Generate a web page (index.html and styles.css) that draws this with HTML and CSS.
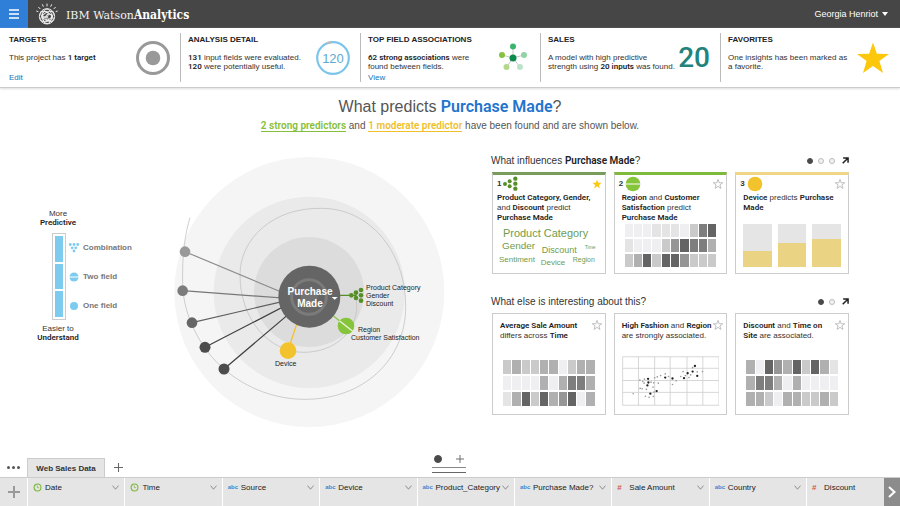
FILE: index.html
```html
<!DOCTYPE html>
<html lang="en">
<head>
<meta charset="utf-8">
<title>IBM Watson Analytics</title>
<link rel="stylesheet" href="styles.css">
</head>
<body>
<svg class="defs" aria-hidden="true">
  <symbol id="star" viewBox="0 0 34 33"><path d="M17 1L20.9 12.2L33 12.4L23.4 19.6L27 31.5L17 24.5L7 31.5L10.6 19.6L1 12.4L13.1 12.2Z"/></symbol>
  <symbol id="open" viewBox="0 0 6 6"><path d="M1 .8H5.2V5M5 1L.6 5.4" fill="none" stroke="#222" stroke-width="1.3"/></symbol>
  <symbol id="chev" viewBox="0 0 7 5"><path d="M.5 .6L3.5 4.2L6.5 .6" fill="none" stroke="#777" stroke-width=".8"/></symbol>
  <symbol id="clock" viewBox="0 0 10 10"><circle cx="5" cy="5" r="3.8" fill="none" stroke="#7cb93c" stroke-width="1.2"/><path d="M4.8 2.6V5.2H6.8" fill="none" stroke="#7cb93c" stroke-width=".8"/></symbol>
  <symbol id="plus" viewBox="0 0 12 12"><path d="M6 0V12M0 6H12" fill="none" stroke="currentColor" stroke-width="1.4"/></symbol>
</svg>

<header class="topbar">
  <button class="menu" aria-label="Menu"><svg viewBox="0 0 10 10"><path d="M0 1H10M0 5H10M0 9H10" stroke="#fff" stroke-width="1.6"/></svg></button>
  <svg class="watson" viewBox="0 0 66 66" aria-hidden="true">
    <g fill="none" stroke="#eee" stroke-width="3">
      <path d="M33 2V10M19 4L22 11M47 4L44 11M7 12L13 18M59 12L53 18M1 24L7 26M65 24L59 26"/>
      <circle cx="33" cy="40" r="23"/>
      <ellipse cx="33" cy="40" rx="22" ry="11" transform="rotate(35 33 40)"/>
      <ellipse cx="33" cy="40" rx="22" ry="11" transform="rotate(-35 33 40)"/>
      <ellipse cx="33" cy="40" rx="22" ry="14" transform="rotate(90 33 40)"/>
      <circle cx="28" cy="34" r="9"/><circle cx="39" cy="43" r="10"/><circle cx="29" cy="49" r="8"/>
    </g>
  </svg>
  <h1 class="brand">IBM Watson<b>Analytics</b></h1>
  <button class="user">Georgia Henriot <span class="caret"></span></button>
</header>

<section class="summary">
  <article class="stat">
    <div class="info"><h2>TARGETS</h2><p>This project has <b>1 target</b></p><a href="#edit" class="low">Edit</a></div>
    <svg class="badge" viewBox="0 0 34 34"><circle cx="17" cy="17" r="15.5" fill="none" stroke="#999" stroke-width="3"/><circle cx="17" cy="17" r="7.3" fill="#999"/></svg>
  </article>
  <article class="stat">
    <div class="info"><h2>ANALYSIS DETAIL</h2><p><b>131</b> input fields were evaluated.<br><b>120</b> were potentially useful.</p></div>
    <svg class="badge ring" viewBox="0 0 34 34"><circle cx="17" cy="17" r="15.8" fill="none" stroke="#7cc5ea" stroke-width="2.2"/><path d="M10.500 2.600A15.800 15.800 0 0 1 16 1.230" fill="none" stroke="#bbb" stroke-width="2.2"/><text x="17" y="22">120</text></svg>
  </article>
  <article class="stat">
    <div class="info"><h2>TOP FIELD ASSOCIATIONS</h2><p><b>62 strong associations</b> were<br>found between fields.</p><a href="#view">View</a></div>
    <svg class="badge net" viewBox="0 0 34 34"><path d="M17 17V5.500M17 17L6 14M17 17L28 14M17 17L10.500 26M17 17L24 26" stroke="#bbb" stroke-width=".8"/><circle cx="17" cy="17" r="3.500" fill="#0d8a4c"/><circle cx="17" cy="5.500" r="3" fill="#3cb46c"/><circle cx="6" cy="14" r="3" fill="#86c240"/><circle cx="28" cy="14" r="3" fill="#92d2a4"/><circle cx="10.500" cy="26" r="3" fill="#b3d88b"/><circle cx="24" cy="26" r="3" fill="#bbe3c8"/></svg>
  </article>
  <article class="stat">
    <div class="info"><h2>SALES</h2><p>A model with high predictive<br>strength using <b>20 inputs</b> was found.</p></div>
    <strong class="score">20</strong>
  </article>
  <article class="stat">
    <div class="info"><h2>FAVORITES</h2><p>One insights has been marked as<br>a favorite.</p></div>
    <svg class="badge gold"><use href="#star"/></svg>
  </article>
</section>

<main>
  <h2 class="question">What predicts <b>Purchase Made</b>?</h2>
  <p class="answer"><a class="strong" href="#strong">2 strong predictors</a> and <a class="moderate" href="#moderate">1 moderate predictor</a> have been found and are shown below.</p>

  <div class="board">
    <aside class="legend">
      <p>More<br><b>Predictive</b></p>
      <div class="scale">
        <div class="bar"><span></span><span></span><span></span></div>
        <ul>
          <li><svg viewBox="0 0 10 10" fill="#7ecbf0"><circle cx="1.300" cy="1.500" r="1.400"/><circle cx="5" cy="1.500" r="1.400"/><circle cx="8.700" cy="1.500" r="1.400"/><circle cx="3.200" cy="4.800" r="1.400"/><circle cx="6.800" cy="4.800" r="1.400"/><circle cx="5" cy="8" r="1.400"/></svg>Combination</li>
          <li><svg viewBox="0 0 10 10"><circle cx="5" cy="5" r="4.500" fill="#7ecbf0"/><path d="M0 5H10" stroke="#fff"/></svg>Two field</li>
          <li><svg viewBox="0 0 10 10"><circle cx="5" cy="5" r="4" fill="#7ecbf0"/></svg>One field</li>
        </ul>
      </div>
      <p>Easier to<br><b>Understand</b></p>
    </aside>

    <svg class="spiral" viewBox="0 0 300 280" role="img" aria-label="Predictors of Purchase Made">
      <g transform="scale(.33333)">
        <circle cx="448" cy="426" r="405" fill="#f5f5f5"/>
        <circle cx="448" cy="427" r="287" fill="#eaeaea"/>
        <circle cx="447" cy="426" r="165" fill="#dcdcdc"/>
        <path d="M90 203C76 250 66 310 68 400C69 500 125 600 192 657C262 718 350 748 435 748C610 748 737 630 737 470C737 300 625 175 485 175C340 172 240 265 240 375C240 510 330 607 430 607C530 607 590 540 590 470L588 430" fill="none" stroke="#c4c4c4" stroke-width="2.500"/>
        <g stroke-width="3.500">
          <path d="M448 461L75 305" stroke="#8c8c8c"/><path d="M448 450L68 422" stroke="#777"/>
          <path d="M448 436L96 518" stroke="#5f5f5f"/><path d="M448 430L135 592M448 440L192 657" stroke="#3f3f3f"/>
          <path d="M437 440L384 602" stroke="#f2c32c" stroke-width="4"/>
          <path d="M448 436H590" stroke="#568f27" stroke-width="4"/><path d="M448 440L558 528" stroke="#86c53b" stroke-width="4"/>
        </g>
        <circle cx="75" cy="305" r="16" fill="#999"/><circle cx="68" cy="422" r="16" fill="#7c7c7c"/><circle cx="96" cy="518" r="16" fill="#666"/><circle cx="135" cy="592" r="16.500" fill="#4c4c4c"/><circle cx="192" cy="657" r="16.500" fill="#4c4c4c"/>
        <circle cx="448" cy="440" r="93" fill="#656565"/>
        <circle cx="447" cy="441" r="52" fill="none" stroke="#7b7b7b" stroke-width="9"/>
        <circle cx="447" cy="441" r="26" fill="#737373"/>
        <path d="M515 441H533L524 449Z" fill="#fff"/>
        <circle cx="384" cy="602" r="25" fill="#f2c32c"/>
        <circle cx="558" cy="528" r="25" fill="#86c53b"/><path d="M538 512L578 544" stroke="#eaf5dc" stroke-width="4"/>
        <g fill="#568f27"><circle cx="574" cy="436" r="7"/><circle cx="588" cy="428" r="7"/><circle cx="588" cy="444" r="7"/><circle cx="603" cy="420" r="7"/><circle cx="603" cy="436" r="7"/><circle cx="603" cy="452" r="7"/></g>
      </g>
      <g class="core"><text x="150" y="145">Purchase</text><text x="150" y="157">Made</text></g>
      <g class="tag"><text x="206" y="140">Product Category</text><text x="206" y="148">Gender</text><text x="206" y="156">Discount</text><text x="198" y="182">Region</text><text x="191" y="190">Customer Satisfaction</text><text x="115" y="216">Device</text></g>
    </svg>

    <div class="insights">
      <section>
        <header><h3>What influences <b>Purchase Made</b>?</h3><nav><button class="dot on" aria-label="Page 1"></button><button class="dot" aria-label="Page 2"></button><button class="dot" aria-label="Page 3"></button><button class="open" aria-label="Open"><svg><use href="#open"/></svg></button></nav></header>
        <div class="cards">
          <article class="card ranked combo">
            <div class="rank">1<svg viewBox="0 0 48 48" fill="#568f27"><circle cx="6" cy="24" r="6"/><circle cx="20" cy="16" r="6"/><circle cx="20" cy="31" r="6"/><circle cx="37" cy="8" r="6.500"/><circle cx="37" cy="23" r="6.500"/><circle cx="37" cy="38" r="6.500"/></svg></div>
            <button class="fav on" aria-label="Favorite"><svg><use href="#star"/></svg></button>
            <p><b>Product Category, Gender,</b><br>and <b>Discount</b> predict<br><b>Purchase Made</b></p>
            <svg class="cloud" viewBox="0 0 104 44"><text class="w11" x="6" y="14">Product Category</text><text class="w10" x="5" y="26">Gender</text><text class="w9" x="45" y="30">Discount</text><text class="w5" x="88" y="26">Time</text><text class="w8" x="2" y="39">Sentiment</text><text class="w8" x="44" y="42">Device</text><text class="w7" x="76" y="39">Region</text></svg>
          </article>
          <article class="card ranked pair">
            <div class="rank">2<svg viewBox="0 0 48 48"><circle cx="24" cy="24" r="22" fill="#86c53b"/><path d="M2 24H46" stroke="#fff" stroke-width="3"/></svg></div>
            <button class="fav" aria-label="Favorite"><svg><use href="#star"/></svg></button>
            <p><b>Region</b> and <b>Customer</b><br><b>Satisfaction</b> predict<br><b>Purchase Made</b></p>
            <div class="heat"><i class="a"></i><i class="a"></i><i class="a"></i><i class="b"></i><i class="b"></i><i class="b"></i><i class="a"></i><i class="c"></i><i class="f"></i><i class="g"></i><i class="b"></i><i class="a"></i><i class="a"></i><i class="a"></i><i class="c"></i><i class="e"></i><i class="g"></i><i class="f"></i><i class="f"></i><i class="d"></i><i class="c"></i><i class="d"></i><i class="g"></i><i class="c"></i><i class="g"></i><i class="g"></i><i class="e"></i><i class="c"></i><i class="c"></i><i class="c"></i></div>
          </article>
          <article class="card ranked single">
            <div class="rank">3<svg viewBox="0 0 48 48"><circle cx="24" cy="24" r="22" fill="#f2c32c"/></svg></div>
            <button class="fav" aria-label="Favorite"><svg><use href="#star"/></svg></button>
            <p><b>Device</b> predicts <b>Purchase</b><br><b>Made</b></p>
            <div class="levels"><span><i style="height:37%"></i></span><span><i style="height:56%"></i></span><span><i style="height:64%"></i></span></div>
          </article>
        </div>
      </section>
      <section>
        <header><h3>What else is interesting about this?</h3><nav><button class="dot on" aria-label="Page 1"></button><button class="dot" aria-label="Page 2"></button><button class="open" aria-label="Open"><svg><use href="#open"/></svg></button></nav></header>
        <div class="cards">
          <article class="card">
            <button class="fav" aria-label="Favorite"><svg><use href="#star"/></svg></button>
            <p><b>Average Sale Amount</b><br>differs across <b>Time</b></p>
            <div class="heat"><i class="c"></i><i class="d"></i><i class="c"></i><i class="c"></i><i class="d"></i><i class="d"></i><i class="a"></i><i class="c"></i><i class="d"></i><i class="d"></i><i class="a"></i><i class="a"></i><i class="a"></i><i class="a"></i><i class="d"></i><i class="a"></i><i class="d"></i><i class="f"></i><i class="f"></i><i class="d"></i><i class="b"></i><i class="d"></i><i class="g"></i><i class="c"></i><i class="g"></i><i class="d"></i><i class="e"></i><i class="g"></i><i class="a"></i><i class="d"></i></div>
          </article>
          <article class="card">
            <button class="fav" aria-label="Favorite"><svg><use href="#star"/></svg></button>
            <p><b>High Fashion</b> and <b>Region</b><br>are strongly associated.</p>
            <svg class="scatter" viewBox="413 203 296 151">
              <path d="M415 205H707V352H415ZM463 205V352M512 205V352M559 205V352M610 205V352M658 205V352M415 240H707M415 277H707M415 313H707" fill="none" stroke="#cfcfcf" stroke-width="2.500"/>
              <g fill="#999"><circle cx="447" cy="317" r="2.500"/><circle cx="467" cy="276" r="2.500"/><circle cx="468" cy="301" r="2.500"/><circle cx="474" cy="302" r="2.500"/><circle cx="476" cy="280" r="2.500"/><circle cx="481" cy="273" r="2.500"/><circle cx="480" cy="285" r="2.500"/><circle cx="487" cy="304" r="2.500"/><circle cx="484" cy="325" r="2.500"/><circle cx="495" cy="328" r="2.500"/><circle cx="508" cy="325" r="2.500"/><circle cx="510" cy="312" r="2.500"/><circle cx="501" cy="282" r="2.500"/><circle cx="509" cy="284" r="2.500"/><circle cx="512" cy="269" r="2.500"/><circle cx="507" cy="297" r="2.500"/><circle cx="520" cy="266" r="2.500"/><circle cx="523" cy="285" r="2.500"/><circle cx="530" cy="262" r="2.500"/><circle cx="544" cy="257" r="2.500"/><circle cx="554" cy="265" r="2.500"/><circle cx="566" cy="289" r="2.500"/><circle cx="577" cy="278" r="2.500"/><circle cx="591" cy="265" r="2.500"/><circle cx="598" cy="250" r="2.500"/><circle cx="605" cy="262" r="2.500"/><circle cx="616" cy="268" r="2.500"/><circle cx="621" cy="260" r="2.500"/><circle cx="627" cy="238" r="2.500"/><circle cx="641" cy="251" r="2.500"/><circle cx="657" cy="250" r="2.500"/></g>
              <g fill="#222"><circle cx="492" cy="272" r="3.500"/><circle cx="493" cy="283" r="3.500"/><circle cx="490" cy="292" r="3.500"/><circle cx="499" cy="317" r="3.500"/><circle cx="518" cy="309" r="3.500"/><circle cx="544" cy="268" r="3.500"/><circle cx="566" cy="271" r="3.500"/><circle cx="601" cy="270" r="3.500"/><circle cx="612" cy="255" r="3.500"/><circle cx="627" cy="250" r="3.500"/><circle cx="634" cy="233" r="3.500"/><circle cx="641" cy="263" r="3.500"/></g>
            </svg>
          </article>
          <article class="card">
            <button class="fav" aria-label="Favorite"><svg><use href="#star"/></svg></button>
            <p><b>Discount</b> and <b>Time on</b><br><b>Site</b> are associated.</p>
            <div class="heat"><i class="d"></i><i class="a"></i><i class="g"></i><i class="e"></i><i class="d"></i><i class="g"></i><i class="c"></i><i class="g"></i><i class="d"></i><i class="b"></i><i class="d"></i><i class="f"></i><i class="f"></i><i class="d"></i><i class="a"></i><i class="d"></i><i class="a"></i><i class="a"></i><i class="a"></i><i class="a"></i><i class="d"></i><i class="d"></i><i class="c"></i><i class="a"></i><i class="d"></i><i class="d"></i><i class="c"></i><i class="c"></i><i class="d"></i><i class="c"></i></div>
          </article>
        </div>
      </section>
    </div>
  </div>
</main>

<footer>
  <div class="tabs">
    <button class="more" aria-label="More"><span></span><span></span><span></span></button>
    <button class="tab">Web Sales Data</button>
    <button class="add" aria-label="Add data"><svg><use href="#plus"/></svg></button>
    <div class="handle"><span class="dot on"></span><svg><use href="#plus"/></svg></div>
  </div>
  <div class="fields">
    <button class="addfield" aria-label="Add field"><svg viewBox="0 0 12 12"><path d="M6 0V12M0 6H12" stroke="#999" stroke-width="2"/></svg></button>
    <button class="field"><svg class="clock"><use href="#clock"/></svg>Date<svg class="chev"><use href="#chev"/></svg></button>
    <button class="field"><svg class="clock"><use href="#clock"/></svg>Time<svg class="chev"><use href="#chev"/></svg></button>
    <button class="field"><span class="abc">abc</span>Source<svg class="chev"><use href="#chev"/></svg></button>
    <button class="field"><span class="abc">abc</span>Device<svg class="chev"><use href="#chev"/></svg></button>
    <button class="field"><span class="abc">abc</span>Product_Category<svg class="chev"><use href="#chev"/></svg></button>
    <button class="field"><span class="abc">abc</span>Purchase Made?<svg class="chev"><use href="#chev"/></svg></button>
    <button class="field"><span class="num">#</span>Sale Amount<svg class="chev"><use href="#chev"/></svg></button>
    <button class="field"><span class="abc">abc</span>Country<svg class="chev"><use href="#chev"/></svg></button>
    <button class="field"><span class="num">#</span>Discount</button>
    <button class="next" aria-label="Next"><svg viewBox="0 0 8 12"><path d="M1 1L6.500 6L1 11" fill="none" stroke="#fff" stroke-width="2"/></svg></button>
  </div>
</footer>
</body>
</html>
```
FILE: styles.css
```css
* { box-sizing: border-box; margin: 0; padding: 0; }
body {
  min-height: 100vh;
  display: flex;
  flex-direction: column;
  background: #fff;
  color: #333;
  font: 8px/9px "Liberation Sans", Arial, sans-serif;
}
b { color: #222; font-family: Roboto, "Liberation Sans", sans-serif; font-weight: 600; }
a { color: #1a70b8; text-decoration: none; }
button { border: 0; background: none; font: inherit; color: inherit; cursor: pointer; }
ul { list-style: none; }
svg { display: block; flex: none; }
.defs { display: none; }

.topbar { display: flex; align-items: center; height: 28px; background: #464646; color: #fff; }
.menu { width: 28px; height: 28px; background: #2f7fd8; display: grid; place-items: center; }
.menu svg { width: 10px; height: 10px; }
.watson { width: 22px; height: 22px; margin-left: 8px; }
.brand { margin-left: 8px; padding-top: 2px; font: 11px/16px "DejaVu Serif", serif; color: #f2f2f2; }
.brand b { font-family: "DejaVu Serif Condensed", "DejaVu Serif", serif; font-size: 12px; font-weight: 700; color: #fff; }
.user { margin-left: auto; padding-right: 12px; display: flex; align-items: center; gap: 4px; font-family: "Liberation Sans", sans-serif; font-size: 9px; }
.caret { border: 3px solid transparent; border-top: 4px solid #fff; border-bottom: 0; }

.summary {
  display: grid;
  grid-template-columns: repeat(5, 1fr);
  padding: 5px 0;
  border-bottom: 1px solid #ccc;
  box-shadow: 0 1px 2px #ddd;
}
.stat { display: flex; align-items: center; justify-content: space-between; height: 49px; padding: 0 10px 0 7px; border-left: 1px solid #bbb; }
.stat:first-child { border-left: 0; padding-left: 9px; }
.info { align-self: stretch; padding-top: 2px; white-space: nowrap; }
.info h2 { font-size: 8px; line-height: 9px; color: #222; margin-bottom: 9px; }
.info a { display: block; margin-top: 2px; }
.info a.low { margin-top: 11px; }
.badge { width: 34px; height: 34px; }
.gold { fill: #fdc70c; }
.ring text { fill: #5fa9cf; font-size: 13px; text-anchor: middle; }
.score { font: 500 28px/34px Roboto, sans-serif; color: #22837c; }

main { flex: 1; padding-top: 9px; }
.question { font-size: 16px; line-height: 20px; font-weight: 400; text-align: center; color: #555; }
.question b { color: #2374cc; }
.answer { font-size: 10px; line-height: 13px; margin-top: 2px; text-align: center; color: #555; }
.answer a { font-family: Roboto, sans-serif; font-weight: 600; }
.strong { color: #86bf3a; border-bottom: 1px solid #86bf3a; }
.moderate { color: #f0c02c; border-bottom: 1px solid #f0c02c; }

.board { display: grid; grid-template-columns: 160fr 331fr 409fr; margin-top: 18px; }
.legend { padding: 59px 0 0 36px; }
.legend p { width: 44px; text-align: center; }
.scale { display: flex; margin: 6px 0 4px 16px; }
.bar { width: 14px; height: 87px; padding: 2px; border: 1px solid #ccc; display: grid; gap: 2px; }
.bar span { background: #7ecbf0; }
.scale ul { margin-left: 3px; display: grid; }
.scale li { display: flex; align-items: center; gap: 4px; color: #777; font-weight: 700; }
.scale li svg { width: 10px; height: 10px; }

.spiral { width: 300px; height: 280px; }
.core { font-size: 10px; font-weight: 700; fill: #fff; text-anchor: middle; }
.tag { font-size: 7px; fill: #222; }

.insights { padding: 4px 51px 0 0; display: grid; gap: 21px; align-content: start; }
.insights header { display: flex; justify-content: space-between; align-items: center; height: 13px; margin-bottom: 5px; }
.insights h3 { font-size: 10px; line-height: 13px; font-weight: 400; }
.insights nav { display: flex; align-items: center; gap: 5px; }
.dot { width: 6px; height: 6px; border-radius: 50%; border: 1px solid #bbb; background: #f2f2f2; }
.dot.on { background: #4a4a4a; border-color: #4a4a4a; }
.open svg { width: 7px; height: 7px; margin-left: 2px; }
.cards { display: grid; grid-template-columns: repeat(3, 1fr); gap: 8px; margin-left: 1px; }
.card { position: relative; height: 102px; padding: 7px 7px 8px; border: 1px solid #ccc; display: flex; flex-direction: column; justify-content: space-between; line-height: 10px; white-space: nowrap; }
.ranked { padding-top: 1px; padding-bottom: 6px; justify-content: flex-start; border-top: 3px solid; }
.combo { border-top-color: #789c5c; padding-left: 4px; padding-right: 4px; }
.pair { border-top-color: #7fb93c; }
.single { border-top-color: #efd686; }
.rank { display: flex; align-items: center; gap: 2px; height: 16px; font-weight: 700; margin: 0 0 1px -3px; }
.combo .rank { margin-left: 0; }
.rank svg { width: 16px; height: 16px; }
.fav { position: absolute; top: 6px; right: 3px; }
.ranked .fav { top: 4px; }
.fav svg { width: 10px; height: 10px; fill: none; stroke: #aaa; stroke-width: 2.5px; overflow: visible; }
.fav.on svg { fill: #fdc70c; stroke: none; }
.cloud { width: 100%; height: 44px; fill: #6f9c4c; }
.w11 { font-size: 11px; } .w10 { font-size: 10px; } .w9 { font-size: 9px; } .w8 { font-size: 8px; } .w7 { font-size: 7px; } .w5 { font-size: 5px; }
.heat { display: grid; grid-template-columns: repeat(10, 1fr); grid-auto-rows: 14px; gap: 2px 1px; margin: 0 3px; }
.ranked .heat, .levels { margin-top: auto; }
.ranked .heat { grid-auto-rows: 13px; }
.a { background: #efeff1; } .b { background: #e4e4e4; } .c { background: #cacaca; } .d { background: #b0b0b0; }
.e { background: #969696; } .f { background: #7e7e7e; } .g { background: #646464; }
.levels { display: grid; grid-template-columns: repeat(3, 1fr); gap: 6px; height: 43px; }
.levels span { background: #e5e5e5; display: flex; align-items: flex-end; }
.levels i { width: 100%; background: #ead382; }
.scatter { width: 100%; height: 50px; }

.tabs { display: grid; grid-template-columns: 27px 78px 26px 1fr; height: 19px; align-items: center; }
.more { display: flex; gap: 2px; justify-content: center; }
.more span { width: 3px; height: 3px; border-radius: 50%; background: #555; }
.tab { height: 19px; background: #e5e5e5; border: 1px solid #ccc; border-bottom: 0; font-weight: 700; color: #333; }
.add svg { width: 9px; height: 9px; margin: auto; color: #666; }
.handle { align-self: start; margin: -3px 0 0 301px; width: 34px; height: 18px; padding: 0 2px; display: flex; justify-content: space-between; align-items: flex-start; border-bottom: 1px solid #666; box-shadow: inset 0 -4px #fff, inset 0 -5px #888; }
.handle .dot { width: 8px; height: 8px; }
.handle svg { width: 8px; height: 8px; color: #666; }
.fields { display: grid; grid-template-columns: 27px repeat(8, 5fr) 4fr 16px; height: 29px; background: #e5e5e5; border-top: 1px solid #ccc; }
.addfield svg { width: 12px; height: 12px; margin: auto; }
.field { display: flex; align-items: center; padding: 0 5px 10px; border-left: 1px solid #fff; white-space: nowrap; text-align: left; color: #222; }
.clock { width: 9px; height: 9px; margin-right: 3px; }
.abc { width: 13px; font-size: 6px; font-weight: 700; color: #3f86cf; }
.num { width: 12px; font-weight: 700; color: #cf5a4c; }
.chev { width: 7px; height: 5px; margin-left: auto; }
.next { background: #8c8c8c; }
.next svg { width: 8px; height: 12px; margin: auto; }
```
